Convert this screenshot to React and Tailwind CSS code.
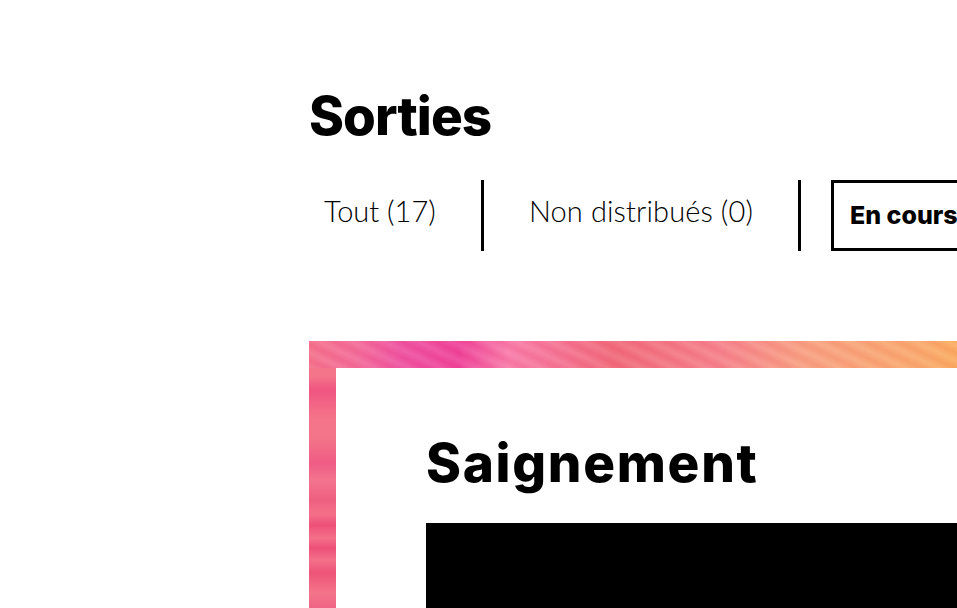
export default function App() {
  return (
    <div className="h-[608px] w-[957px] overflow-hidden bg-white font-['Inter',sans-serif] text-black">
      <main className="ml-[309px] w-[900px] pt-[86px]">
        <h1 className="text-[53px] leading-[60px] font-extrabold tracking-[-0.9px]">Sorties</h1>

        <nav className="mt-[34px] flex h-[71px] items-stretch">
          <a className="flex w-[175px] items-center border-r-[3px] border-black pb-[9px] pl-[15px] font-['Lato',sans-serif] text-[29px] font-light">
            Tout (17)
          </a>
          <a className="flex w-[317px] items-center border-r-[3px] border-black pb-[9px] pl-[45px] font-['Lato',sans-serif] text-[29px] font-light tracking-[0.12px]">
            Non distribués (0)
          </a>
          <a className="ml-[30px] flex w-[260px] items-center border-[3px] border-black pl-[16px] text-[25px] font-extrabold">
            En cours (17)
          </a>
        </nav>

        <section className="relative mt-[90px] bg-[#f4708a] pt-[27px] pl-[27px]">
          <div className="pointer-events-none absolute inset-x-0 top-0 h-[27px] bg-[linear-gradient(90deg,#f4708a_0px,#f26898_50px,#ee50a0_91px,#ee3f98_150px,#f87aa8_200px,#f06878_305px,#f5808a_410px,#f8a080_494px,#f9aa68_619px,#fbab5c_648px)]" />
          <div className="pointer-events-none absolute inset-x-0 top-0 h-[27px] bg-[repeating-linear-gradient(25deg,rgba(255,255,255,0.10)_0px,rgba(230,60,100,0.08)_7px,rgba(255,255,255,0.10)_14px)]" />
          <div className="pointer-events-none absolute top-[27px] bottom-0 left-0 w-[27px] bg-[linear-gradient(180deg,#f4748a_0px,#f4748a_8px,#ef5580_22px,#f4748a_50px,#f4748a_70px,#ef5c84_95px,#f4748e_112px,#ee5f80_132px,#f4708a_146px,#ed5078_157px,#f4708a_170px,#ed5078_180px,#f4708a_192px,#ed5478_204px,#f4748a_225px,#ef6484_240px)]" />
          <div className="relative h-[300px] bg-white pt-[65px] pl-[90px]">
            <h2 className="text-[53px] leading-[60px] font-extrabold tracking-[1.7px]">Saignement</h2>
            <div className="mt-[30px] h-[200px] bg-black" />
          </div>
        </section>
      </main>
    </div>
  );
}
